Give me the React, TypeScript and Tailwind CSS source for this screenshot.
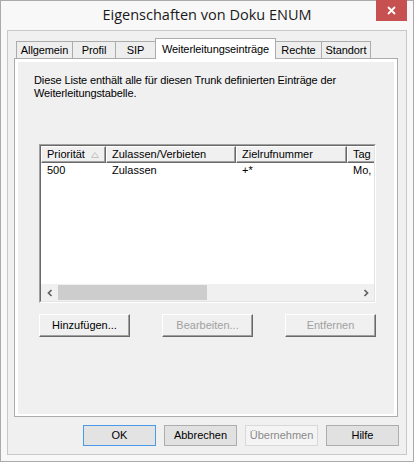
import React from "react";

const F = "font-['Liberation_Sans',Arial,sans-serif]";

function Tab({ label, w, first }: { label: string; w: string; first?: boolean }) {
  return (
    <div
      className={`${w} ${first ? "" : "-ml-px"} h-[17px] shrink-0 border-t border-l border-r border-[#acacac] bg-[#eeeeee] flex items-center justify-center text-[11px] tracking-[-0.1px] text-black`}
    >
      {label}
    </div>
  );
}

function ClassicButton({ label, disabled }: { label: string; disabled?: boolean }) {
  return (
    <div
      className={`w-[91px] h-[23px] bg-[#f0f0f0] border border-t-white border-l-white border-r-[#696969] border-b-[#696969] shadow-[inset_-1px_-1px_0_#a0a0a0] flex items-center justify-center text-[11px] ${
        disabled ? "text-[#a0a0a0]" : "text-black"
      }`}
    >
      {label}
    </div>
  );
}

function WinButton({ label, primary, disabled }: { label: string; primary?: boolean; disabled?: boolean }) {
  const cls = primary
    ? "border-[#4a9ae8] bg-[#e3e3e3] text-black"
    : disabled
    ? "border-[#d9d9d9] bg-[#f4f4f4] text-[#8a8a8a]"
    : "border-[#adadad] bg-[#e1e1e1] text-black";
  return (
    <div className={`w-[73px] h-[21px] border ${cls} flex items-center justify-center text-[11px]`}>
      {label}
    </div>
  );
}

function HeaderCell({ label, w, sort }: { label: string; w: string; sort?: boolean }) {
  return (
    <div
      className={`${w} shrink-0 h-[17px] bg-[#f0f0f0] border border-t-white border-l-white border-r-[#696969] border-b-[#696969] shadow-[inset_-1px_-1px_0_#a0a0a0] flex items-center pl-[5px] text-[11px] text-black whitespace-nowrap`}
    >
      <span>{label}</span>
      {sort && (
        <svg width="8" height="6" viewBox="0 0 8 6" className="ml-[6px]">
          <polygon points="0.5,5.5 4,0.5 7.5,5.5" fill="none" stroke="#c4c4c4" strokeWidth="1" />
        </svg>
      )}
    </div>
  );
}

function Cell({ label, w }: { label: string; w: string }) {
  return (
    <div className={`${w} shrink-0 pl-[6px] text-[11px] text-black whitespace-nowrap overflow-hidden`}>
      {label}
    </div>
  );
}

export default function App() {
  return (
    <div className={`${F} w-[414px] h-[462px] border border-[#aaaaaa] bg-[#f8f8f8] flex flex-col`}>
      {/* Title bar */}
      <div className="h-[29px] grid grid-cols-[1fr_auto_1fr] items-start">
        <div />
        <div className="pt-[4px] font-['Open_Sans','Noto_Sans',sans-serif] text-[14.5px] text-[#1a1a1a] leading-[20px] whitespace-nowrap">
          Eigenschaften von Doku ENUM
        </div>
        <div className="flex justify-end pr-[6px] -mt-px">
          <div className="w-[31px] h-[21px] bg-[#c75050] flex items-center justify-center">
            <svg width="9" height="9" viewBox="0 0 9 9">
              <path d="M1 1 L8 8 M8 1 L1 8" stroke="white" strokeWidth="1.8" />
            </svg>
          </div>
        </div>
      </div>

      {/* Client area */}
      <div className="mx-[6px] mb-[6px] flex-1 border border-[#c8c8c8] bg-[#f0f0f0] flex flex-col">
        {/* Tab control */}
        <div className="ml-[6px] mt-[7px] w-[384px] flex flex-col">
          <div className="h-[20px] flex items-end pl-[2px]">
            <Tab label="Allgemein" w="w-[57px]" first />
            <Tab label="Profil" w="w-[44px]" />
            <Tab label="SIP" w="w-[41px]" />
            <div className="-ml-px relative z-10 -mb-px w-[121px] h-[21px] shrink-0 border-t border-l border-r border-[#acacac] bg-white flex items-center justify-center text-[11px] tracking-[-0.1px] text-black">
              Weiterleitungseinträge
            </div>
            <Tab label="Rechte" w="w-[47px]" />
            <Tab label="Standort" w="w-[50px]" />
          </div>
          <div className="h-[359px] border border-[#acacac] bg-white pt-[3px] px-[3px] pb-[2px]">
            <div className="h-full bg-[#f0f0f0] flex flex-col">
              <div className="pl-[16px] pt-[12px] text-[11px] leading-[13px] tracking-[-0.12px] text-black">
                Diese Liste enthält alle für diesen Trunk definierten Einträge der
                <br />
                Weiterleitungstabelle.
              </div>

              {/* List view */}
              <div className="ml-[21px] mt-[44px] w-[337px] h-[159px] border border-t-[#a0a0a0] border-l-[#a0a0a0] border-r-white border-b-white">
                <div className="h-full border border-t-[#696969] border-l-[#696969] border-r-[#e3e3e3] border-b-[#e3e3e3] bg-white flex flex-col overflow-hidden">
                  <div className="flex overflow-hidden">
                    <HeaderCell label="Priorität" w="w-[65px]" sort />
                    <HeaderCell label="Zulassen/Verbieten" w="w-[130px]" />
                    <HeaderCell label="Zielrufnummer" w="w-[111px]" />
                    <HeaderCell label="Tag" w="w-[80px]" />
                  </div>
                  <div className="flex h-[14px] items-center overflow-hidden">
                    <Cell label="500" w="w-[65px]" />
                    <Cell label="Zulassen" w="w-[130px]" />
                    <Cell label="+*" w="w-[111px]" />
                    <Cell label="Mo," w="w-[80px]" />
                  </div>
                  <div className="flex-1" />
                  {/* Horizontal scrollbar */}
                  <div className="h-[17px] bg-[#f0f0f0] flex items-stretch">
                    <div className="w-[17px] flex items-center justify-center">
                      <svg width="8" height="8" viewBox="0 0 8 8">
                        <polyline points="5.5,1 2.5,4 5.5,7" fill="none" stroke="#606060" strokeWidth="1.7" />
                      </svg>
                    </div>
                    <div className="flex-1 py-[1px] flex">
                      <div className="w-[149px] bg-[#cdcdcd]" />
                    </div>
                    <div className="w-[17px] flex items-center justify-center">
                      <svg width="8" height="8" viewBox="0 0 8 8">
                        <polyline points="2.5,1 5.5,4 2.5,7" fill="none" stroke="#606060" strokeWidth="1.7" />
                      </svg>
                    </div>
                  </div>
                </div>
              </div>

              {/* Buttons */}
              <div className="ml-[21px] mt-[11px] w-[337px] flex justify-between">
                <ClassicButton label="Hinzufügen..." />
                <ClassicButton label="Bearbeiten..." disabled />
                <ClassicButton label="Entfernen" disabled />
              </div>
            </div>
          </div>
        </div>

        {/* Bottom buttons */}
        <div className="mt-[8px] pr-[7px] flex justify-end gap-[8px]">
          <WinButton label="OK" primary />
          <WinButton label="Abbrechen" />
          <WinButton label="Übernehmen" disabled />
          <WinButton label="Hilfe" />
        </div>
      </div>
    </div>
  );
}
